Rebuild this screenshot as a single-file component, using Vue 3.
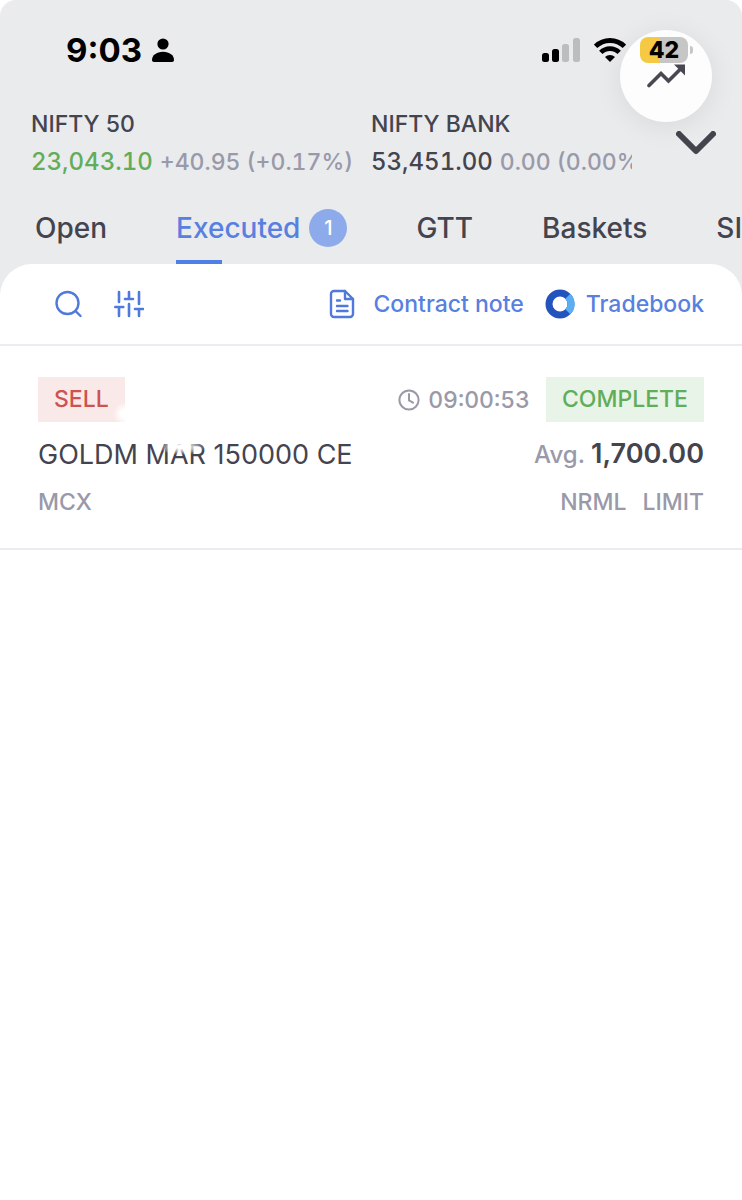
<script setup>
import { ref } from "vue";

const indices = [
  { name: "NIFTY 50", price: "23,043.10", change: "+40.95 (+0.17%)", up: true },
  { name: "NIFTY BANK", price: "53,451.00", change: "0.00 (0.00%)", up: false },
];

const tabs = [
  { label: "Open" },
  { label: "Executed", count: 1 },
  { label: "GTT" },
  { label: "Baskets" },
  { label: "SIP" },
];

const orders = [
  {
    id: 1,
    side: "SELL",
    time: "09:00:53",
    status: "COMPLETE",
    symbol: "GOLDM MAR 150000 CE",
    price: "1,700.00",
    exchange: "MCX",
    product: "NRML",
    type: "LIMIT",
  },
];

const active = ref("Executed");
</script>

<template>
  <div class="app">
    <header class="top">
      <div class="status">
        <span class="clock">9:03</span>
        <svg class="person" width="22" height="24" viewBox="0 0 22 24">
          <circle cx="11" cy="6" r="5.6" />
          <path d="M2 24C.8 24 0 23.2 0 22c0-4.600 4.400-8.200 11-8.200S22 17.400 22 22c0 1.200-.8 2-2 2z" />
        </svg>
        <div class="system">
          <svg width="38" height="24" viewBox="0 0 38 24">
            <rect x="0" y="15" width="7" height="9" rx="2.500" />
            <rect x="10" y="11" width="7" height="13" rx="2.500" />
            <rect x="20" y="6" width="7" height="18" rx="2.500" fill="#bcbdbe" />
            <rect x="31" y="0" width="7" height="24" rx="2.500" fill="#bcbdbe" />
          </svg>
          <svg class="wifi" width="32" height="24" viewBox="0 0 32 24">
            <g fill="none" stroke="#000" stroke-width="4.800">
              <path d="M1.600 8.400a20.500 20.500 0 0 1 28.800 0" />
              <path d="M6.800 14.400a13 13 0 0 1 18.400 0" />
            </g>
            <path d="M16 24l-5-5.100a7.200 7.200 0 0 1 10 0z" />
          </svg>
          <span class="battery">42</span>
          <span class="cap"></span>
        </div>
        <button class="fab" aria-label="Markets">
          <svg width="40" height="24" viewBox="0 0 40 24">
            <path d="M3 21.500L15 9.500L22.500 17L34 5.500" fill="none" stroke="#484852" stroke-width="3.600" stroke-linecap="round" />
            <path d="M28 0.500H39v11z" fill="#484852" />
          </svg>
        </button>
      </div>

      <div class="indices">
        <div v-for="item in indices" :key="item.name" class="index">
          <div class="name">{{ item.name }}</div>
          <div class="quote">
            <span class="price" :class="{ up: item.up }">{{ item.price }}</span>
            <span class="change">{{ item.change }}</span>
          </div>
        </div>
        <button class="expand" aria-label="Expand">
          <svg width="40" height="24" viewBox="0 0 40 24">
            <path d="M3 3L20 20L37 3" fill="none" stroke="#44444f" stroke-width="6" stroke-linecap="round" stroke-linejoin="round" />
          </svg>
        </button>
      </div>

      <nav class="tabs">
        <button
          v-for="tab in tabs"
          :key="tab.label"
          class="tab"
          :class="{ active: active === tab.label }"
          @click="active = tab.label"
        >
          {{ tab.label }}
          <span v-if="tab.count" class="count">{{ tab.count }}</span>
        </button>
      </nav>
    </header>

    <main class="panel">
      <div class="toolbar">
        <button aria-label="Search">
          <svg width="28" height="28" viewBox="0 0 28 28" fill="none" stroke="#5079dc" stroke-width="2.400" stroke-linecap="round">
            <circle cx="12.500" cy="13" r="11" />
            <path d="M20.500 21l5 5" />
          </svg>
        </button>
        <button class="filter" aria-label="Filter">
          <svg width="30" height="28" viewBox="0 0 30 28" fill="none" stroke="#5079dc" stroke-width="2.600" stroke-linecap="round">
            <path d="M5 2v10M1.300 17h8M5 17v9M15 2v7M11 9h8M15 14v12M25 2v12M21 19h8M25 19v7" />
          </svg>
        </button>
        <a href="#" class="link note">
          <svg width="26" height="30" viewBox="0 0 26 30" fill="none" stroke="#5079dc" stroke-width="2.400" stroke-linecap="round" stroke-linejoin="round">
            <path d="M16 2H5a3 3 0 0 0-3 3v20a3 3 0 0 0 3 3h16a3 3 0 0 0 3-3V10z" />
            <path d="M16 2v8h8M8 11.500h3M8 17h10.500M8 22h10.500" />
          </svg>
          Contract note
        </a>
        <a href="#" class="link book">
          <svg width="30" height="30" viewBox="0 0 30 30" fill="none" stroke-width="7">
            <circle cx="15" cy="15" r="11" stroke="#2353bd" />
            <path d="M22.800 7.200a11 11 0 0 1 0 15.600" stroke="#59aef5" />
          </svg>
          Tradebook
        </a>
      </div>

      <article v-for="order in orders" :key="order.id" class="order">
        <div class="row">
          <span class="tag sell">{{ order.side }}</span>
          <span class="time">
            <svg width="22" height="22" viewBox="0 0 22 22" fill="none" stroke="#9999a9" stroke-width="2" stroke-linecap="round">
              <circle cx="11" cy="11" r="9.600" />
              <path d="M11 5v6.500l4 2.200" />
            </svg>
            {{ order.time }}
          </span>
          <span class="tag complete">{{ order.status }}</span>
        </div>
        <div class="row middle">
          <span class="symbol">{{ order.symbol }}</span>
          <span class="avg">Avg. <b>{{ order.price }}</b></span>
        </div>
        <div class="row meta">
          <span class="exchange">{{ order.exchange }}</span>
          <span>{{ order.product }}</span>
          <span>{{ order.type }}</span>
        </div>
      </article>
    </main>
  </div>
</template>

<style>
body {
  margin: 0;
  background: #fff;
}
</style>

<style scoped>
.app {
  font-family: Inter, "Liberation Sans", sans-serif;
  font-size: 23px;
  font-weight: 500;
  line-height: 32px;
  color: #44444f;
  background: #eaebed;
  border-radius: 16px 16px 0 0;
  min-height: 100vh;
  display: flex;
  flex-direction: column;
  overflow: hidden;
}

button {
  font: inherit;
  color: inherit;
  background: none;
  border: none;
  padding: 0;
  cursor: pointer;
}

svg {
  display: block;
  flex: none;
}

.status {
  position: relative;
  display: flex;
  align-items: center;
  gap: 10px;
  height: 36px;
  padding: 32px 49px 40px 66px;
  color: #000;
}

.clock {
  font-size: 33px;
  font-weight: 700;
}

.system {
  display: flex;
  align-items: center;
  margin-left: auto;
  z-index: 1;
}

.wifi {
  margin: 0 14px;
}

.battery {
  width: 48px;
  line-height: 26px;
  border-radius: 8px;
  background: linear-gradient(90deg, #f6c944 42%, #c6c6c7 42%);
  text-align: center;
  font-size: 23px;
  font-weight: 800;
}

.cap {
  width: 3px;
  height: 8px;
  margin-left: 2px;
  border-radius: 0 4px 4px 0;
  background: #c6c6c7;
}

.fab {
  position: absolute;
  top: 30px;
  right: 30px;
  width: 92px;
  height: 92px;
  border-radius: 50%;
  background: #fdfdfd;
  box-shadow: 0 4px 28px rgba(0, 0, 0, 0.08);
  display: flex;
  justify-content: center;
  align-items: center;
}

.indices {
  display: flex;
  padding: 0 26px 0 31px;
}

.index {
  flex: none;
  width: 324px;
  white-space: nowrap;
}

.index + .index {
  flex: 1;
  width: 0;
  margin-left: 16px;
  overflow: hidden;
}

.quote {
  display: flex;
  gap: 7px;
  margin-top: 6px;
  font-variant-numeric: tabular-nums;
}

.price {
  font-size: 24px;
}

.price.up {
  color: #62ad5a;
}

.change {
  color: #9999a9;
}

.expand {
  align-self: center;
  margin-left: 44px;
}

.tabs {
  display: flex;
  gap: 69px;
  padding: 26px 0 0 35px;
  overflow: hidden;
}

.tab {
  position: relative;
  display: flex;
  align-items: center;
  gap: 9px;
  flex: none;
  height: 60px;
  padding-bottom: 12px;
  box-sizing: border-box;
  font-size: 28px;
}

.tab.active {
  color: #5780e0;
}

.tab.active::after {
  content: "";
  position: absolute;
  left: 0;
  bottom: 0;
  width: 46px;
  height: 4px;
  background: #4f7fe5;
}

.count {
  width: 38px;
  line-height: 38px;
  border-radius: 50%;
  background: #8dabea;
  color: #fff;
  font-size: 20px;
  text-align: center;
}

.panel {
  flex: 1;
  background: #fff;
  border-radius: 32px 32px 0 0;
}

.toolbar {
  display: flex;
  align-items: center;
  height: 80px;
  padding: 0 38px 0 55px;
  border-bottom: 2px solid #ebecf2;
}

.filter {
  margin-left: 31px;
}

.link {
  display: flex;
  align-items: center;
  color: #5780e0;
  text-decoration: none;
}

.note {
  gap: 18px;
  margin-left: auto;
}

.book {
  gap: 11px;
  margin-left: 21px;
}

.order {
  padding: 31px 38px 30px;
  border-bottom: 2px solid #ebecf2;
}

.row {
  display: flex;
  align-items: center;
}

.tag {
  padding: 0 16px;
  line-height: 45px;
}

.sell {
  background: radial-gradient(circle at 100% 82%, #fff 4px, #fae9e9 12px);
  color: #cd5350;
}

.complete {
  background: #e8f4e8;
  color: #62ad5a;
}

.time {
  display: flex;
  align-items: center;
  gap: 8px;
  margin: 0 16px 0 auto;
  color: #9999a9;
  font-variant-numeric: tabular-nums;
}

.middle {
  margin-top: 16px;
}

.symbol {
  position: relative;
  margin-right: auto;
  font-size: 27px;
  font-weight: 400;
}

/* soft highlight over the top of the expiry month */
.symbol::after {
  content: "";
  position: absolute;
  top: 0;
  left: 38%;
  width: 48px;
  height: 16px;
  background: radial-gradient(closest-side, #fff 20%, transparent);
}

.avg {
  font-size: 24px;
  color: #9999a9;
}

.avg b {
  font-size: 27px;
  font-weight: 600;
  color: #44444f;
}

.meta {
  gap: 16px;
  margin-top: 15px;
  color: #9999a9;
}

.exchange {
  margin-right: auto;
}
</style>
